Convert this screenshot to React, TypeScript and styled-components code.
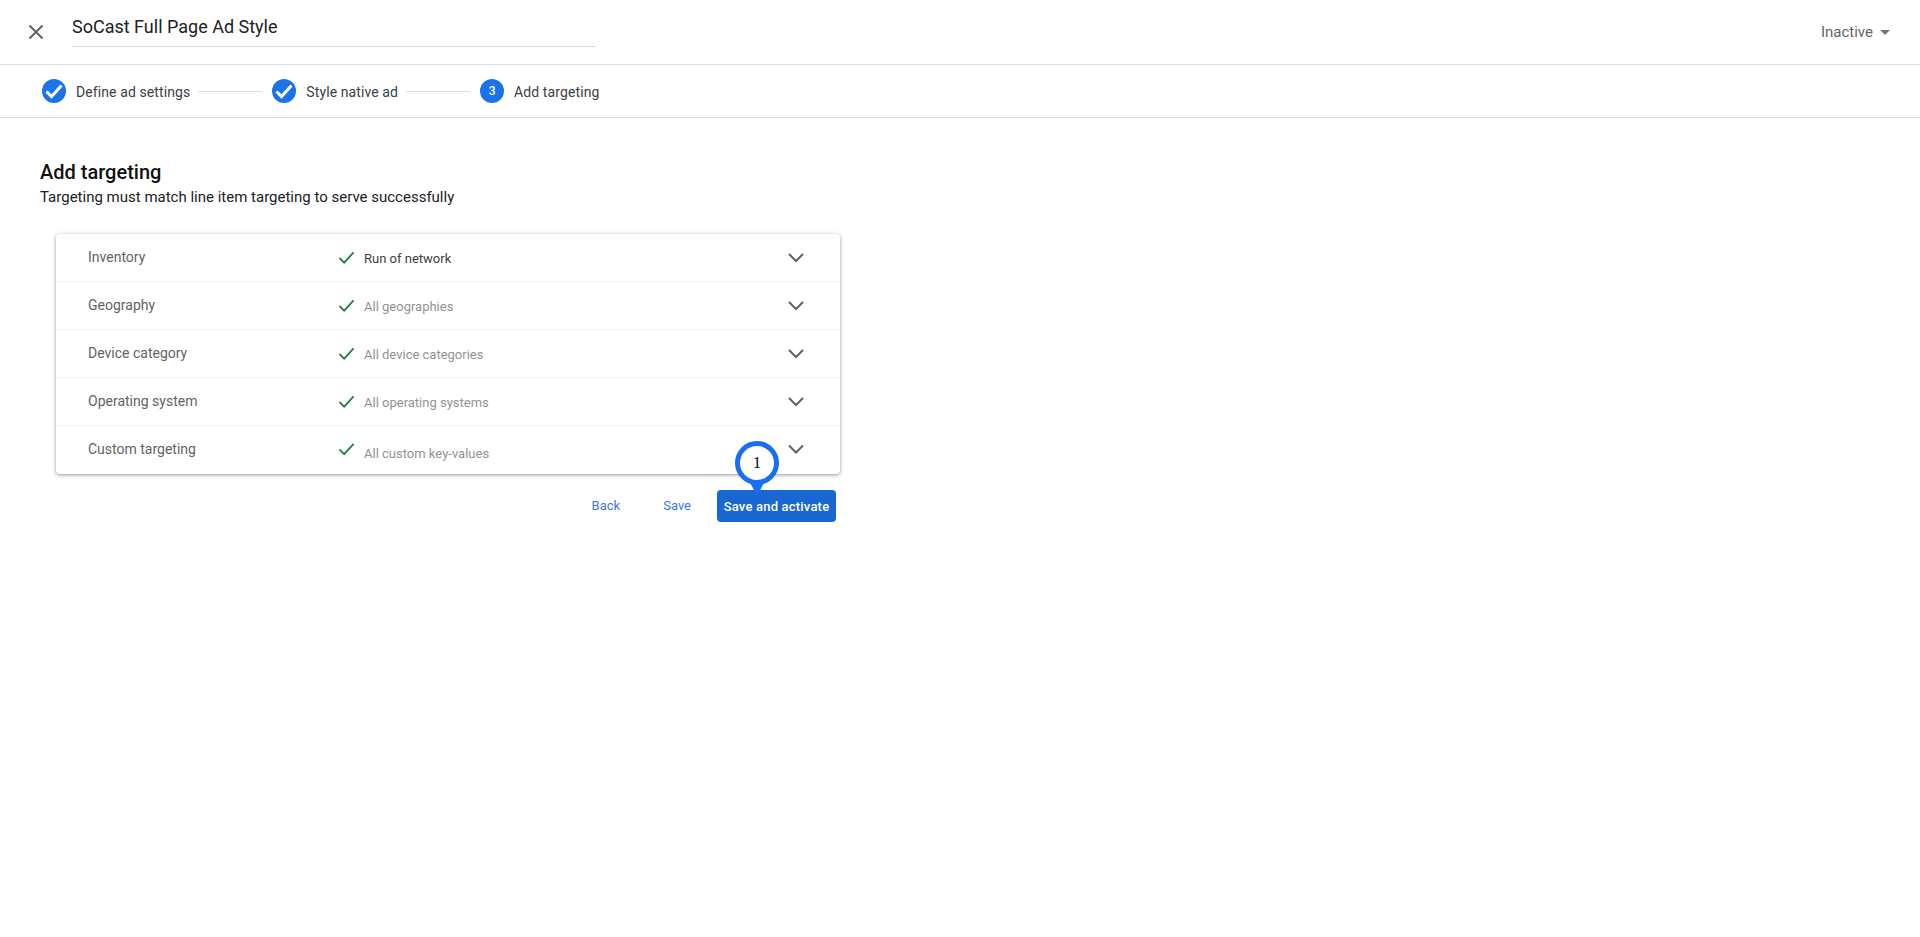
import React from "react";
import styled, { createGlobalStyle } from "styled-components";

const Global = createGlobalStyle`
  html, body { margin: 0; padding: 0; background: #fff; }
  body { font-family: Roboto, "Liberation Sans", sans-serif; }
`;

const Page = styled.div`
  width: 1920px;
  height: 937px;
  overflow: hidden;
  background: #fff;
`;

const Header = styled.header`
  height: 65px;
  box-sizing: border-box;
  border-bottom: 1px solid #dadce0;
  display: flex;
  align-items: flex-start;
  padding-left: 26px;
  padding-right: 30px;
`;

const CloseButton = styled.div`
  width: 20px;
  height: 20px;
  margin-top: 22px;
  color: #5f6368;
`;

const TitleField = styled.div`
  width: 524px;
  height: 47px;
  box-sizing: border-box;
  margin-left: 26px;
  border-bottom: 1px solid #dadce0;
  padding-top: 16px;
  font-size: 18px;
  line-height: 22px;
  color: #202124;
`;

const StatusMenu = styled.div`
  margin-left: auto;
  margin-top: 23px;
  display: flex;
  align-items: center;
  gap: 7px;
  font-size: 15px;
  line-height: 18px;
  color: #5f6368;
`;

const Caret = styled.span`
  width: 0;
  height: 0;
  border-left: 5.5px solid transparent;
  border-right: 5.5px solid transparent;
  border-top: 5px solid #757575;
`;

const Stepper = styled.nav`
  height: 53px;
  box-sizing: border-box;
  border-bottom: 1px solid #dadce0;
  display: flex;
  align-items: center;
  padding-left: 42px;
`;

const StepIcon = styled.span`
  width: 24px;
  height: 24px;
  border-radius: 50%;
  background: #1a73e8;
  color: #fff;
  display: flex;
  align-items: center;
  justify-content: center;
  font-size: 12px;
  font-weight: 500;
  flex: none;
`;

const StepLabel = styled.span`
  margin: 2px 0 0 10px;
  font-size: 14px;
  line-height: 20px;
  letter-spacing: 0.1px;
  color: #3c4043;
`;

const StepLine = styled.span`
  width: 64px;
  height: 1px;
  margin: 0 10px 0 8px;
  background: #dadce0;
`;

const Content = styled.main`
  padding: 42px 0 0 40px;
`;

const Heading = styled.h1`
  margin: 0;
  font-size: 20px;
  line-height: 24px;
  font-weight: 500;
  color: #111;
`;

const Subheading = styled.p`
  margin: 3px 0 0;
  font-size: 15px;
  line-height: 20px;
  color: #202124;
`;

const Card = styled.section`
  position: relative;
  width: 784px;
  margin: 27px 0 0 16px;
  background: #fff;
  border-radius: 4px;
  box-shadow: 0 1px 4px rgba(60, 64, 67, 0.45), 0 1px 2px rgba(60, 64, 67, 0.15);
`;

const Row = styled.div`
  height: 48px;
  box-sizing: border-box;
  display: grid;
  grid-template-columns: 250px 26px 1fr 24px;
  align-items: center;
  padding: 0 32px;
  & + & { border-top: 1px solid #f1f3f4; }
  &:first-child { height: 47px; }
  &:last-child { height: 49px; }
`;

const RowLabel = styled.span<{ $shift: number }>`
  font-size: 14px;
  line-height: 20px;
  color: #5f6368;
  transform: translateY(${(p) => p.$shift}px);
`;

const CheckWrap = styled.span<{ $shift: number }>`
  display: flex;
  color: #188038;
  transform: translateY(${(p) => p.$shift}px);
`;

const RowValue = styled.span<{ $muted: boolean; $shift: number }>`
  font-size: 13px;
  line-height: 18px;
  color: ${(p) => (p.$muted ? "#909396" : "#3c4043")};
  transform: translateY(${(p) => p.$shift}px);
`;

const Chevron = styled.span<{ $shift: number }>`
  display: flex;
  color: #5f6368;
  transform: translateY(${(p) => p.$shift}px);
`;

const Actions = styled.div`
  position: relative;
  width: 780px;
  margin: 16px 0 0 16px;
  display: flex;
  justify-content: flex-end;
  align-items: center;
`;

const TextButton = styled.button`
  border: 0;
  background: none;
  padding: 0;
  font-family: inherit;
  font-size: 13px;
  font-weight: 400;
  line-height: 32px;
  color: #3b78e7;
`;

const BackButton = styled(TextButton)`
  margin-right: 43px;
`;

const SaveButton = styled(TextButton)`
  margin-right: 26px;
`;

const PrimaryButton = styled.button`
  width: 119px;
  height: 32px;
  border: 0;
  border-radius: 4px;
  background: #1967d2;
  color: #fff;
  padding: 0;
  font-family: inherit;
  font-size: 13px;
  font-weight: 500;
  letter-spacing: 0.2px;
`;

const Pin = styled.div`
  position: absolute;
  left: 679px;
  top: -49px;
  width: 44px;
  height: 56px;
`;

const PinTail = styled.svg`
  position: absolute;
  left: 0;
  top: 0;
`;

const PinBubble = styled.div`
  position: absolute;
  left: 0;
  top: 0;
  width: 44px;
  height: 44px;
  box-sizing: border-box;
  border: 5px solid #1a6ef5;
  border-radius: 50%;
  background: #fff;
  display: flex;
  align-items: center;
  justify-content: center;
  font-family: "Liberation Serif", serif;
  font-size: 16px;
  color: #000;
`;

const rows = [
  { label: "Inventory", value: "Run of network", muted: false, labelShift: -1, checkShift: 0, valueShift: 1, chev: 0 },
  { label: "Geography", value: "All geographies", muted: true, labelShift: -1, checkShift: 0, valueShift: 1, chev: 0 },
  { label: "Device category", value: "All device categories", muted: true, labelShift: -1, checkShift: 0, valueShift: 1, chev: 0 },
  { label: "Operating system", value: "All operating systems", muted: true, labelShift: -1, checkShift: 0, valueShift: 1, chev: 0 },
  { label: "Custom targeting", value: "All custom key-values", muted: true, labelShift: -1.5, checkShift: -1.5, valueShift: 3.5, chev: -0.5 },
];

const Check = ({ size, width }: { size: number; width: number }) => (
  <svg width={size} height={size} viewBox="0 0 18 18" fill="none" stroke="currentColor" strokeWidth={width}>
    <path d="M1.5 9.5 L6.5 14.5 L16.5 3.5" />
  </svg>
);

export default function App() {
  return (
    <Page>
      <Global />
      <Header>
        <CloseButton>
          <svg width="20" height="20" viewBox="0 0 20 20" fill="none" stroke="currentColor" strokeWidth="2">
            <path d="M3.5 3.5 L16.5 16.5 M16.5 3.5 L3.5 16.5" />
          </svg>
        </CloseButton>
        <TitleField>SoCast Full Page Ad Style</TitleField>
        <StatusMenu>
          Inactive
          <Caret />
        </StatusMenu>
      </Header>
      <Stepper>
        <StepIcon><Check size={18} width={3} /></StepIcon>
        <StepLabel>Define ad settings</StepLabel>
        <StepLine />
        <StepIcon><Check size={18} width={3} /></StepIcon>
        <StepLabel>Style native ad</StepLabel>
        <StepLine />
        <StepIcon>3</StepIcon>
        <StepLabel>Add targeting</StepLabel>
      </Stepper>
      <Content>
        <Heading>Add targeting</Heading>
        <Subheading>Targeting must match line item targeting to serve successfully</Subheading>
        <Card>
          {rows.map((r) => (
            <Row key={r.label}>
              <RowLabel $shift={r.labelShift}>{r.label}</RowLabel>
              <CheckWrap $shift={r.checkShift}><Check size={17} width={1.8} /></CheckWrap>
              <RowValue $muted={r.muted} $shift={r.valueShift}>{r.value}</RowValue>
              <Chevron $shift={r.chev}>
                <svg width="24" height="24" viewBox="0 0 24 24" fill="none" stroke="currentColor" strokeWidth="2">
                  <path d="M5 8 L12 15 L19 8" />
                </svg>
              </Chevron>
            </Row>
          ))}
        </Card>
        <Actions>
          <BackButton>Back</BackButton>
          <SaveButton>Save</SaveButton>
          <PrimaryButton>Save and activate</PrimaryButton>
          <Pin>
            <PinTail width="44" height="56" viewBox="0 0 44 56">
              <path d="M11 34 L22 55 L33 34 Z" fill="#1a6ef5" />
            </PinTail>
            <PinBubble>1</PinBubble>
          </Pin>
        </Actions>
      </Content>
    </Page>
  );
}
